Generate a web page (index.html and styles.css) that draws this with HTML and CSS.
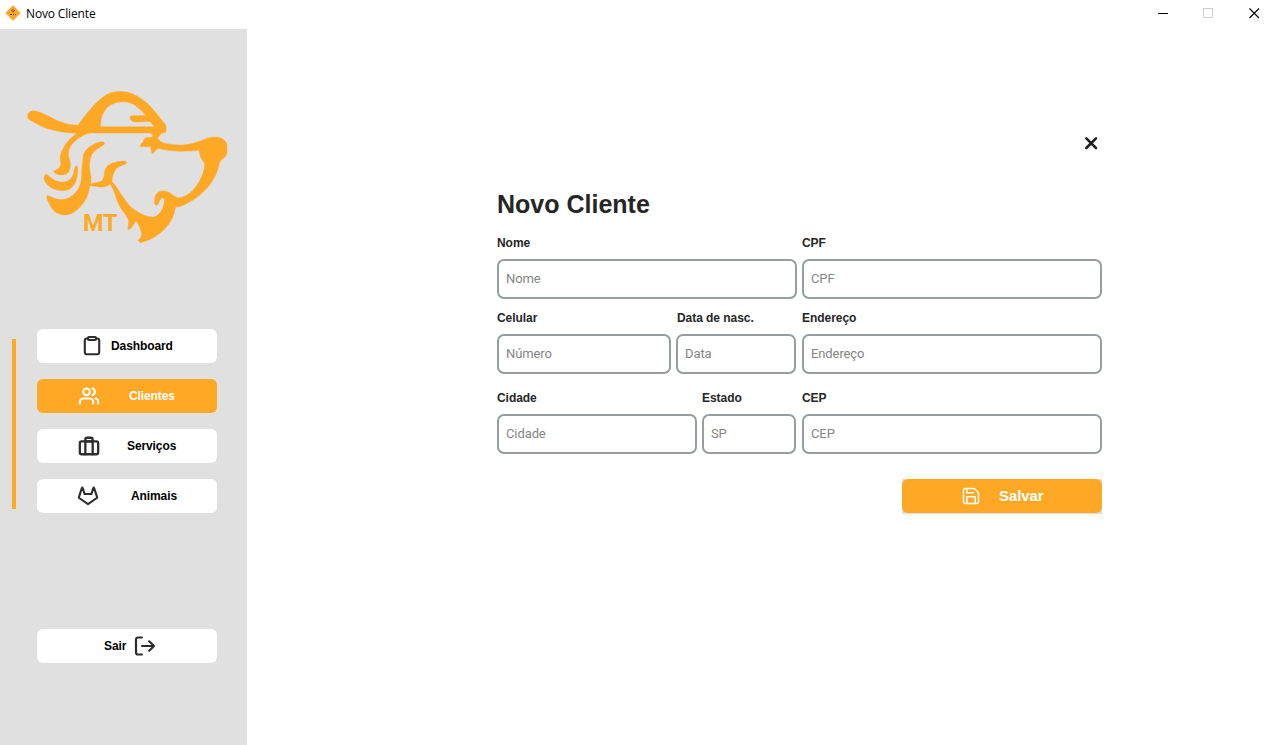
FILE: index.html
```html
<!DOCTYPE html>
<html lang="pt-BR">
<head>
<meta charset="utf-8">
<title>Novo Cliente</title>
<link rel="stylesheet" href="styles.css">
</head>
<body>
<header class="titlebar">
  <svg class="app-icon" width="16" height="16" viewBox="0 0 16 16"><path d="M8 .3 15.700 8 8 15.700.3 8Z" fill="#ffa826"/><path d="M6 5.500 8 4.800l2 .9M7 7l2-.5M5 9.500h2M8 9.500h1M10 9.500h1" stroke="#6b4a1c" stroke-width=".9" fill="none"/></svg>
  <span class="window-title">Novo Cliente</span>
  <div class="window-controls">
    <svg width="11" height="11" viewBox="0 0 11 11" shape-rendering="crispEdges"><path d="M0 5h10v1H0z" fill="#000"/></svg>
    <svg width="11" height="11" viewBox="0 0 11 11"><path d="M.5.500h9v9h-9z" fill="none" stroke="#ccc"/></svg>
    <svg width="11" height="11" viewBox="0 0 11 11"><path d="m.5.500 9.500 9.500m0-9.500L.5 10" fill="none" stroke="#000" stroke-width="1.100"/></svg>
  </div>
</header>
<div class="window-body">
  <aside class="sidebar">
    <svg class="logo" width="207" height="160" viewBox="24 87 207 160">
      <g fill="#ffa826" stroke="#ffa826" stroke-width=".4">
        <path fill-rule="evenodd" d="M29 119.500C26 116 28 111 33.300 110.800C39 111 47 115.500 54 119C62 123 69 124.800 78 125.300C87 113 95 102 106 95C111 92 116 91.300 121 91.400C131 91.500 140 97 148 104C154 110 160 118 165 124Q166 125.500 166 127V132Q165 133 161.700 133L157.500 138L160.700 141.700C166 144 175 145.200 183.300 145C198 144 205 137 215.500 137C222 137 227 141 227 146V153C226 158 221 159 219.700 162.300C217 175 212 184 203 192C196 199 187 204 178.500 207L175.700 206.700C174 216 171 222 165 228.500C158 236 149 241 140 242.700L138 240.500Q141 238 141.700 235C141 230 139 224 136 221C134 223 132 229 128.300 229.700C127 228 129.500 224 128.500 220C126 214 122 211 120 206.700C116 200 115 191 110 184Q107 187 103 187C98 187.500 95 186 90 185.700C88 195 87 199 81.700 205C77 211 71 215 65 215C59 215 54 212 51 207C49 203 46.500 199 46.700 197C47 195 48 195.500 49 196C57 200 63 201 70 197.300C80 191 82 182 81.700 171C82 168 83 160 83.300 155C86 147 95 143 100.500 142C103 141 106 143 103.500 145C98 149 94 150 91.700 155C88 164 90 170 91 177Q91.500 180 90.300 184.500C95 181.500 99 183 101.700 180.700C106 176 103 172 106 168.500C107 163.500 117 161 125 161C128 162 127 164 123 165C116 167 112.500 172 112 181.700C119 189 122 197 129 205C136 212 147 218 154.500 217C162 214 165 204 164.300 198.500Q162.500 197 160.500 199.300C158.500 202 159 204 156.700 205.700L154.700 204.300C154 197 156 192 161 191.200C169 189.500 171 195 178.300 198C188 197 195 189 199.500 181C204 173 205 166 204.300 163C203 160 199.500 159 199.300 150.300C188 151.500 170 152 160 148.500C156 148 155 152 152.300 154Q150.500 150 150.700 146.700H140Q140.500 144 143 142Q144 137 148.500 137.500Q152 138.500 153 135L150 133H90C80 135 71 144 69.500 148.500C66 157 72 160 70 168C69 174 66 175 60 175C57 174.500 54 173 53.300 171.500C57 169.500 61 168 60.700 163.300C60 158 60 153 63.500 148C67 141 72 137 76.700 133.300C62 133 48 130 38 124.500ZM100.700 126.800H154.300Q153 124 150 121.700C144 121 138 123 134 121.700C129.500 120.500 129 116.500 131.500 115.700L146 115.500C140 109 134 103.500 128 102.300C119 100.500 110 104 106 109C102 114 100.500 119 100.700 126.800Z"/>
        <path d="M75 166.500Q76.500 165 77.500 167C78.500 178 75 186 69 189.500C63 192 54 190 50 187C46 184 43.500 180 44 177Q44.700 174 46.700 174.300C53 180 57 182 62 182C72 182 73.500 175 75 166.500Z"/>
      </g>
      <text class="logo-text" x="83" y="231" textLength="34.500" lengthAdjust="spacingAndGlyphs">MT</text>
    </svg>
    <div class="menu">
      <span class="menu-marker"></span>
      <nav class="menu-items">
        <a class="nav-button dashboard">
          <svg class="icon" width="24" height="24" viewBox="0 0 24 24"><path d="M16 4.500h1.200a2 2 0 0 1 2 2v11.800a2 2 0 0 1-2 2H6.800a2 2 0 0 1-2-2V6.500a2 2 0 0 1 2-2H8"/><rect x="8" y="3" width="8" height="3" rx="1"/></svg>
          <span>Dashboard</span>
        </a>
        <a class="nav-button clientes active">
          <svg class="icon" width="20" height="20" viewBox="0 0 24 24"><path d="M17 21v-2a4 4 0 0 0-4-4H5a4 4 0 0 0-4 4v2"/><circle cx="9" cy="7" r="4"/><path d="M23 21v-2a4 4 0 0 0-3-3.870M16 3.130a4 4 0 0 1 0 7.750"/></svg>
          <span>Clientes</span>
        </a>
        <a class="nav-button servicos">
          <svg class="icon" width="22" height="22" viewBox="0 0 24 24"><rect x="2" y="7" width="20" height="14" rx="2"/><path d="M16 21V5a2 2 0 0 0-2-2h-4a2 2 0 0 0-2 2v16M8 7h8"/></svg>
          <span>Serviços</span>
        </a>
        <a class="nav-button animais">
          <svg class="icon" width="20" height="20" viewBox="0 0 24 24"><path d="m22.650 14.390-10.650 7.300-10.650-7.300a.84.84 0 0 1-.3-.94l1.220-3.780 2.440-7.510a.42.42 0 0 1 .82 0l2.440 7.510h8.060l2.440-7.510a.42.42 0 0 1 .82 0l2.440 7.510 1.220 3.780a.84.84 0 0 1-.3.94z"/></svg>
          <span>Animais</span>
        </a>
      </nav>
    </div>
    <a class="nav-button sair">
      <span>Sair</span>
      <svg class="icon" width="22" height="20" viewBox="0 0 22 20"><path d="M8 1.500H4a2 2 0 0 0-2 2v13a2 2 0 0 0 2 2h4M8 10h12M15.200 5.300l4.800 4.700-4.800 4.700"/></svg>
    </a>
  </aside>
  <main class="content">
    <form class="client-form">
      <button class="close" type="button" aria-label="Fechar"><svg width="14" height="14" viewBox="0 0 14 14"><path d="m2.300 2.300 9.700 9.700M12 2.300 2.300 12"/></svg></button>
      <h1 class="form-title">Novo Cliente</h1>
      <div class="row row-name">
        <label class="field"><span>Nome</span><input type="text" placeholder="Nome"></label>
        <label class="field"><span>CPF</span><input type="text" placeholder="CPF"></label>
      </div>
      <div class="row row-contact">
        <label class="field"><span>Celular</span><input type="text" placeholder="Número"></label>
        <label class="field date"><span>Data de nasc.</span><input type="text" placeholder="Data"></label>
        <label class="field"><span>Endereço</span><input type="text" placeholder="Endereço"></label>
      </div>
      <div class="row row-city">
        <label class="field"><span>Cidade</span><input type="text" placeholder="Cidade"></label>
        <label class="field"><span>Estado</span><input type="text" placeholder="SP"></label>
        <label class="field"><span>CEP</span><input type="text" placeholder="CEP"></label>
      </div>
      <div class="save-wrap">
        <button class="save" type="button">
          <svg width="20" height="20" viewBox="0 0 24 24"><path d="M19 21H5a2 2 0 0 1-2-2V5a2 2 0 0 1 2-2h11l5 5v11a2 2 0 0 1-2 2z"/><path d="M17 21v-8H7v8M7 3v5h8"/></svg>
          <span>Salvar</span>
        </button>
      </div>
    </form>
  </main>
</div>
</body>
</html>
```
FILE: styles.css
```css
* { box-sizing: border-box; }

body {
  margin: 0;
  height: 745px;
  display: flex;
  flex-direction: column;
  overflow: hidden;
  background: #fff;
  font-family: "Liberation Sans", Arial, sans-serif;
}

.titlebar {
  height: 29px;
  flex: none;
  display: flex;
  align-items: center;
  padding: 0 12px 3px 5px;
}

.window-title {
  margin: 2px 0 0 5px;
  font: 12px/16px "Open Sans", "Noto Sans", sans-serif;
  letter-spacing: -0.15px;
  color: #000;
}

.window-controls {
  margin-left: auto;
  display: flex;
  gap: 34px;
}

.window-controls svg:last-child { margin-left: 1px; }

.window-body {
  flex: 1;
  display: flex;
}

.sidebar {
  width: 247px;
  background: #e0e0e0;
}

.logo {
  display: block;
  margin: 58px 0 0 24px;
}

.logo-text {
  font: 700 24px Roboto, sans-serif;
  fill: #ffa826;
}

.menu {
  display: flex;
  align-items: center;
  gap: 21px;
  margin: 82px 0 0 12px;
}

.menu-marker {
  width: 4px;
  height: 170px;
  margin-top: 6px;
  background: #ffa826;
}

.menu-items {
  display: flex;
  flex-direction: column;
  gap: 16px;
}

.nav-button {
  display: flex;
  align-items: center;
  width: 180px;
  height: 34px;
  border-radius: 6px;
  background: #fff;
  color: #000;
  font-size: 12px;
  font-weight: 700;
  letter-spacing: -0.1px;
}

.icon {
  fill: none;
  stroke: #2d2d2d;
  stroke-width: 2.500;
  stroke-linecap: round;
  stroke-linejoin: round;
  overflow: visible;
}

.dashboard { padding-left: 43px; gap: 7px; }
.dashboard .icon { stroke-width: 2.100; }
.clientes { padding-left: 42px; gap: 30px; }
.servicos { padding-left: 41px; gap: 27px; }
.animais { padding-left: 41px; gap: 33px; }
.sair { margin: 116px 0 0 37px; padding-left: 67px; gap: 8px; }
.sair .icon { stroke-width: 2.200; }

.nav-button.active {
  background: #ffa826;
  color: #fff;
}

.active .icon { stroke: #fff; }

.content {
  flex: 1;
  padding: 107px 0 0 250px;
}

.client-form {
  width: 605px;
  display: flex;
  flex-direction: column;
}

.close {
  align-self: flex-end;
  display: flex;
  margin-right: 4px;
  padding: 0;
  border: 0;
  background: none;
}

.close path {
  stroke: #1e1e1e;
  stroke-width: 2.500;
  stroke-linecap: round;
}

.form-title {
  margin: 39px 0 0;
  font-size: 25px;
  line-height: 30px;
  color: #262626;
}

.row {
  display: grid;
  column-gap: 5px;
}

.row-name {
  grid-template-columns: 300px 300px;
  margin-top: 17px;
}

.row-contact {
  grid-template-columns: 174px 121px 300px;
  margin-top: 12px;
}

.row-city {
  grid-template-columns: 200px 95px 300px;
  margin-top: 17px;
}

.field {
  display: flex;
  flex-direction: column;
  gap: 8px;
  font-size: 12px;
  line-height: 15px;
  font-weight: 700;
  letter-spacing: -0.05px;
  color: #262626;
}

.field input {
  width: 100%;
  height: 40px;
  padding: 0 7px 2px;
  border: 2px solid #979da2;
  border-radius: 7px;
  background: #fff;
  font: 13px Roboto, sans-serif;
  letter-spacing: -0.1px;
}

.date input { width: 120px; }
.date span { padding-left: 1px; }
.row-city .field:nth-child(2) input { width: 94px; }

.field input::placeholder { color: #858585; opacity: 1; }

.save-wrap {
  align-self: flex-end;
  margin-top: 25px;
  padding-bottom: 1px;
  background: #dfdfdf;
}

.save {
  display: flex;
  align-items: center;
  gap: 18px;
  width: 200px;
  height: 34px;
  padding: 0 0 0 59px;
  border: 0;
  border-radius: 6px;
  background: #ffa826;
  color: #fff;
  font: 700 15px "Liberation Sans", Arial, sans-serif;
  letter-spacing: -0.1px;
}

.save span { margin-bottom: 2px; }

.save svg {
  fill: none;
  stroke: #fff;
  stroke-width: 1.800;
  stroke-linejoin: round;
  stroke-linecap: round;
}
```
